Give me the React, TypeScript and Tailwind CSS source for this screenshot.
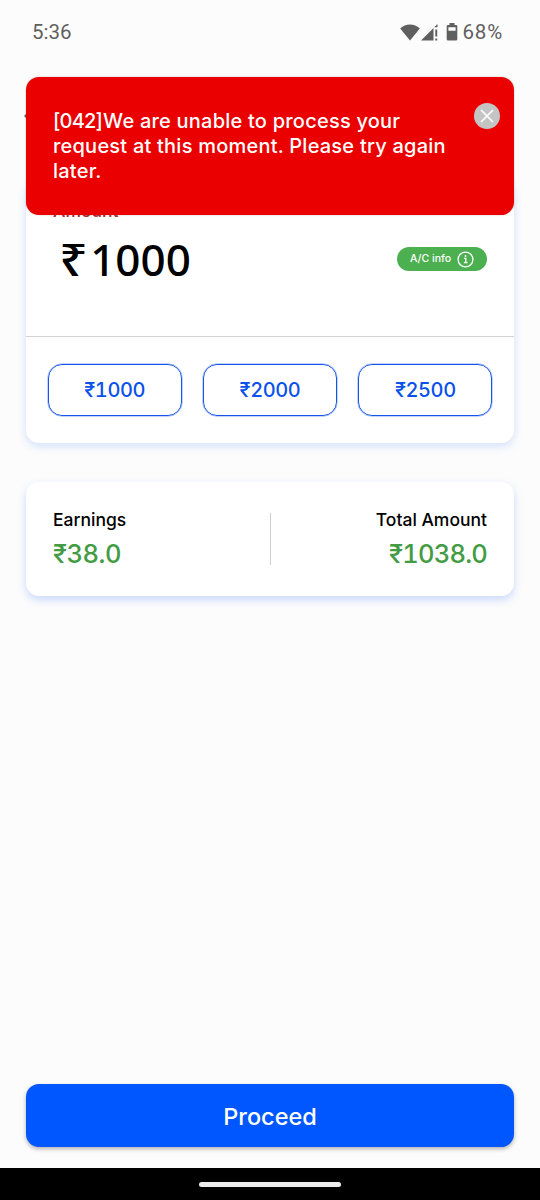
import React, { useState } from 'react';

const QUICK_AMOUNTS = [1000, 2000, 2500];

const StatusBar: React.FC = () => (
  <div className="flex h-16 items-center justify-between pl-8 pr-[37px] font-['Roboto',sans-serif] text-[20.5px] text-[#5f5f5f]">
    <span>5:36</span>
    <div className="flex items-center">
      <svg width="20" height="17" viewBox="0 0 20 17" fill="#5f5f5f">
        <path d="M10 16.500 0.200 4.600C3 2 6.300.500 10 .500s7 1.500 9.800 4.100z" />
      </svg>
      <svg className="ml-px" width="17" height="17" viewBox="0 0 17 17" fill="#5f5f5f">
        <path d="M0 16.500 12.500 4v12.500zM13.200 3.300 16.500 0v3.300z" />
        <path d="M14.300 5.500h1.900v7h-1.900zM14.300 14.500h1.900v2h-1.900z" />
      </svg>
      <svg className="ml-2" width="12" height="18" viewBox="0 0 12 18">
        <path
          fill="#5f5f5f"
          fillRule="evenodd"
          d="M3.500 0h5v2H10a1.300 1.300 0 0 1 1.300 1.300v13A1.300 1.300 0 0 1 10 17.600H2a1.300 1.300 0 0 1-1.300-1.300v-13A1.300 1.300 0 0 1 2 2h1.500zM2.400 4.200v3.600h7.200V4.200z"
        />
      </svg>
      <span className="ml-[5px] tracking-[0.8px]">68%</span>
    </div>
  </div>
);

interface ErrorToastProps {
  code: string;
  message: string;
  onClose: () => void;
}

const ErrorToast: React.FC<ErrorToastProps> = ({ code, message, onClose }) => (
  <div className="absolute left-[26px] top-[77px] flex h-[138px] w-[488px] items-start rounded-[13px] bg-[#ea0000] shadow-[0_0_2px_rgba(0,0,0,0.25)]">
    <p className="w-[430px] pl-[27px] pt-[32px] text-xl leading-[25px] font-medium tracking-[0.220px] text-white">
      <span className="mr-px tracking-[-0.8px]">{`[${code}]`}</span>
      {message}
    </p>
    <button onClick={onClose} className="ml-[18px] mt-[26px] size-[26px] rounded-full bg-[#c4c4c4]">
      <svg width="26" height="26" viewBox="0 0 27 27" stroke="#fff" strokeWidth="1.800" strokeLinecap="round">
        <path d="M7.800 7.800l11.400 11.400M19.200 7.800 7.800 19.200" />
      </svg>
    </button>
  </div>
);

const AmountCard: React.FC = () => {
  const [amount, setAmount] = useState(1000);

  return (
    <div className="mx-[26px] rounded-[13px] bg-white shadow-[0_3px_10px_rgba(60,120,250,0.22)]">
      <div className="h-[157px] border-b border-[#d3d3d3] pl-[27px] pr-[27px] pt-[22px]">
        <div className="h-[18px] text-[17.5px] leading-[18px] font-medium text-[#a83232]">Amount</div>
        <div className="mt-[11px] flex items-center justify-between">
          <span className="pl-[6px] font-['Noto_Sans',sans-serif] text-[44px] leading-[56px] font-medium text-black">
            <span className="mr-[6px] inline-block origin-left scale-x-115">₹</span>
            {amount}
          </span>
          <button className="flex h-6 w-[90px] items-center justify-center rounded-full bg-[#4caf50] text-[10.5px] font-medium text-white">
            A/C info
            <svg className="ml-[6px]" width="17" height="17" viewBox="0 0 17 17" fill="none" stroke="#fff" strokeWidth="1.300">
              <circle cx="8.500" cy="8.500" r="7.400" />
              <path d="M7 7.400h1.800v4.300M6.900 11.700h3.600" />
              <circle cx="8.500" cy="4.900" r="1" fill="#fff" stroke="none" />
            </svg>
          </button>
        </div>
      </div>
      <div className="grid h-[106px] grid-cols-3 gap-[21px] px-[21.500px] pt-[27px]">
        {QUICK_AMOUNTS.map((value) => (
          <button
            key={value}
            onClick={() => setAmount(value)}
            className="h-[52px] rounded-[14px] border border-[#1555e8] pb-px text-xl font-medium tracking-[-0.4px] text-[#0b52ea] tabular-nums ring-[0.500px] ring-[#1555e8]/50"
          >
            {`₹${value}`}
          </button>
        ))}
      </div>
    </div>
  );
};

const EarningsCard: React.FC = () => (
  <div className="mx-[26px] mt-[39px] flex h-[114px] items-center justify-between rounded-[13px] bg-white px-[27px] shadow-[0_4px_9px_rgba(60,120,250,0.26)]">
    <div className="w-[120px] pt-px">
      <div className="text-[17.5px] leading-7 font-medium text-black">Earnings</div>
      <div className="text-[25.5px] leading-10 font-medium tracking-[-0.5px] text-[#439c43] tabular-nums">₹38.0</div>
    </div>
    <div className="h-[52px] w-px bg-[#cfcfcf]" />
    <div className="w-[120px] pt-px text-right whitespace-nowrap">
      <div className="text-[17.5px] leading-7 font-medium text-black">Total Amount</div>
      <div className="text-[25.5px] leading-10 font-medium tracking-[-0.8px] text-[#439c43] tabular-nums">₹1038.0</div>
    </div>
  </div>
);

const App: React.FC = () => {
  const [showError, setShowError] = useState(true);

  return (
    <div className="relative flex h-[1200px] w-[540px] flex-col overflow-hidden bg-[#fcfcfc] font-['Inter',sans-serif]">
      <StatusBar />
      <header className="flex h-[116px] items-center pl-6 pb-3">
        <svg width="20" height="20" viewBox="0 0 20 20" fill="none" stroke="#555" strokeWidth="2">
          <path d="M9 2 1.500 10 9 18M1.500 10H19" />
        </svg>
      </header>
      <AmountCard />
      <EarningsCard />
      <div className="mt-auto px-[26px] pb-[21px]">
        <button className="h-[63px] w-full rounded-[13px] bg-[#0057ff] pt-[2px] text-[23.5px] font-medium text-white shadow-[0_2px_4px_rgba(0,0,0,0.3)]">
          Proceed
        </button>
      </div>
      <div className="flex h-8 items-center justify-center bg-black">
        <div className="h-[5px] w-[142px] rounded-full bg-[#ececec]" />
      </div>
      {showError && (
        <ErrorToast
          code="042"
          message="We are unable to process your request at this moment. Please try again later."
          onClose={() => setShowError(false)}
        />
      )}
    </div>
  );
};

export default App;
